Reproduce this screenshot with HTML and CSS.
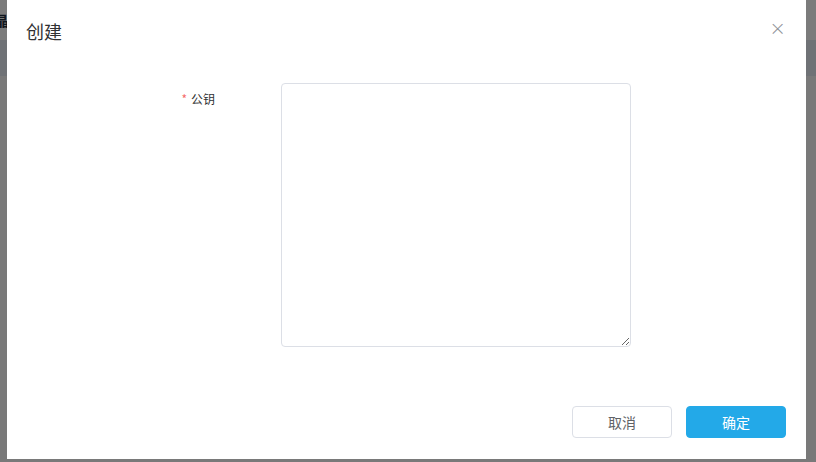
FILE: index.html
```html
<!DOCTYPE html>
<html lang="zh-CN">
<head>
    <meta charset="UTF-8">
    <title>创建</title>
    <link rel="stylesheet" href="styles.css">
</head>
<body>
    <div class="pagina">
        <div class="topo"><span class="marca">晶</span></div>
        <div class="faixa"></div>
        <div class="resto"></div>
    </div>
    <div class="mascara"></div>
    <div class="dialogo">
        <div class="cabeca">
            <span class="titulo">创建</span>
            <span class="fechar">&#215;</span>
        </div>
        <form class="corpo" action="#">
            <div class="linha">
                <label class="rotulo" for="chave"><i>*</i>公钥</label>
                <textarea id="chave" class="campo"></textarea>
            </div>
        </form>
        <div class="rodape">
            <button class="botao">取消</button>
            <button class="botao primario">确定</button>
        </div>
    </div>
</body>
</html>
```

FILE: styles.css
```css
*{
    box-sizing: border-box;
    margin: 0;
    padding: 0;
}
body{
    width: 816px;
    height: 462px;
    overflow: hidden;
    position: relative;
    font-family: "Noto Sans CJK SC", "Noto Sans", sans-serif;
    background-color: #f0f2f5;
}
.pagina{
    height: 462px;
    display: flex;
    flex-direction: column;
}
.topo{
    height: 40px;
    background-color: #f6f6f6;
    padding: 7px 0 0 0;
}
.marca{
    font-size: 14px;
    font-weight: bold;
    color: #1e2c3a;
    margin-left: -5px;
}
.faixa{
    height: 36px;
    background-color: #dfe5ec;
}
.resto{
    flex: 1;
    background-color: #f2f2f2;
}
.mascara{
    position: absolute;
    inset: 0;
    background-color: rgba(0, 0, 0, 0.5);
}
.dialogo{
    position: absolute;
    left: 7px;
    top: 0;
    width: 799px;
    height: 459px;
    background-color: #fff;
    display: flex;
    flex-direction: column;
}
.cabeca{
    height: 62px;
    display: flex;
    justify-content: space-between;
    align-items: flex-start;
    padding: 18px 20px 0 19px;
}
.titulo{
    font-size: 18px;
    line-height: 26px;
    color: #303133;
}
.fechar{
    font-size: 20px;
    line-height: 20px;
    color: #909399;
    font-family: "DejaVu Sans", sans-serif;
    font-weight: 200;
}
.corpo{
    flex: 1;
    padding: 21px 0 0 0;
}
.linha{
    display: flex;
}
.rotulo{
    width: 274px;
    padding: 8px 66px 0 0;
    text-align: right;
    font-size: 12px;
    line-height: 16px;
    color: #303133;
}
.rotulo i{
    font-style: normal;
    color: #f56c6c;
    margin-right: 4px;
}
.campo{
    width: 350px;
    height: 264px;
    border: 1px solid #dcdfe6;
    border-radius: 4px;
    resize: vertical;
    outline: none;
    font-family: inherit;
}
.rodape{
    display: flex;
    justify-content: flex-end;
    gap: 14px;
    padding: 0 20px 21px 0;
}
.botao{
    width: 100px;
    height: 32px;
    border: 1px solid #dcdfe6;
    border-radius: 4px;
    background-color: #fff;
    color: #606266;
    font-size: 14px;
    font-family: inherit;
}
.primario{
    border-color: #23a9e8;
    background-color: #23a9e8;
    color: #fff;
}
```
